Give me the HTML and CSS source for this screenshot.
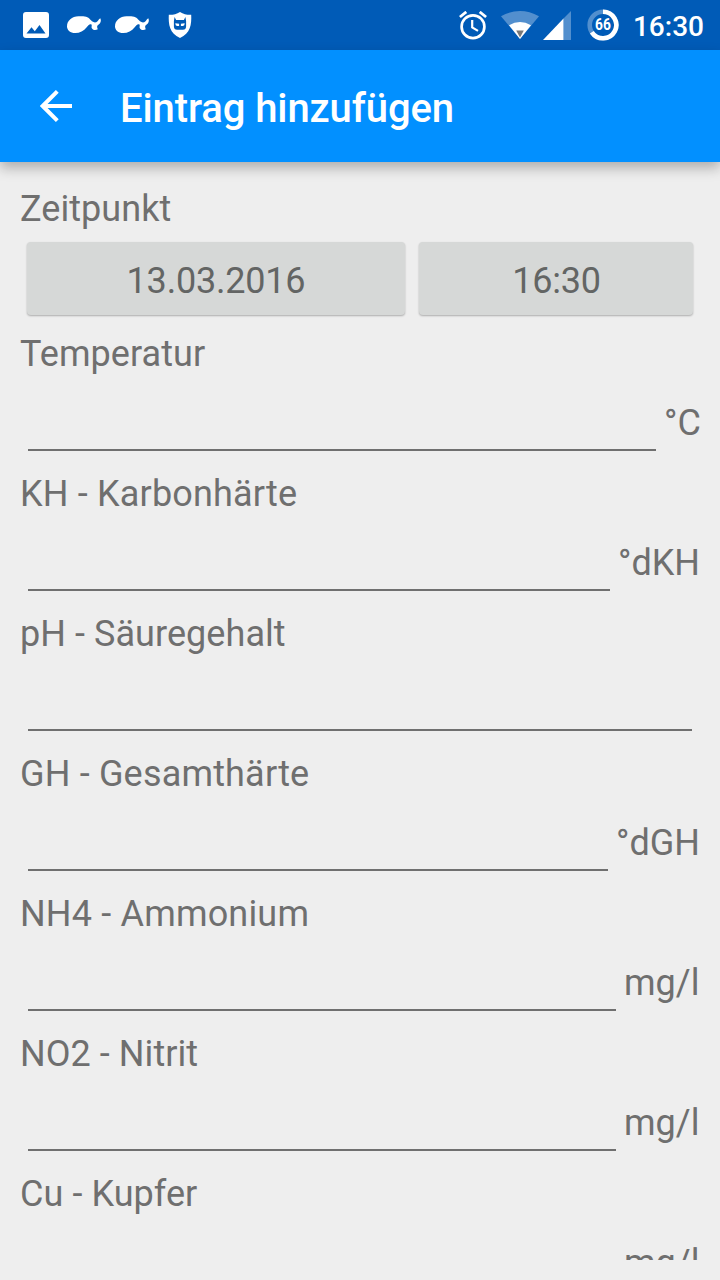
FILE: index.html
```html
<!DOCTYPE html>
<html lang="de">
<head>
    <meta charset="UTF-8">
    <meta name="viewport" content="width=device-width, initial-scale=1.0">
    <title>Eintrag hinzufügen</title>
    <link rel="stylesheet" href="styles.css">
</head>
<body>

    <!-- Statusleiste -->
    <div class="statusbar">
        <div class="notifications">
            <svg width="26" height="26" viewBox="0 0 26 26">
                <path fill="#fff" fill-rule="evenodd" d="M3 0h20a3 3 0 0 1 3 3v20a3 3 0 0 1-3 3H3a3 3 0 0 1-3-3V3a3 3 0 0 1 3-3zM3.500 21.500h19L16.500 13l-4.700 6.200L8.500 15.200z"/>
            </svg>
            <svg class="whale" width="34" height="18" viewBox="0 0 34 18">
                <path fill="#fff" d="M0 10.500C0 4.500 5 .5 11.500.3C19-.2 21.500 1.200 24 4.300c1.500 1.800 3.500 2.400 5.200 2C31 5.800 31.200 3 33.300 2.200c1.200 2.500.5 5.200-2.800 7.300c-.7 1.200-.3 2.300.3 3.800c-2.500 1.500-5.300.7-6.100-1.300c-.5-1.600.6-2.800-.5-3.700c-1.700-.6-3.200 1-4.500 3C16.800 15.300 12.500 17.200 8 17.100C3.500 17 0 14.300 0 10.500z"/>
            </svg>
            <svg class="whale" width="34" height="18" viewBox="0 0 34 18">
                <path fill="#fff" d="M0 10.500C0 4.500 5 .5 11.500.3C19-.2 21.500 1.200 24 4.300c1.500 1.800 3.500 2.400 5.200 2C31 5.800 31.200 3 33.300 2.200c1.200 2.500.5 5.200-2.800 7.300c-.7 1.200-.3 2.300.3 3.800c-2.500 1.500-5.300.7-6.100-1.300c-.5-1.600.6-2.800-.5-3.700c-1.700-.6-3.200 1-4.500 3C16.800 15.300 12.500 17.200 8 17.100C3.500 17 0 14.300 0 10.500z"/>
            </svg>
            <svg class="shield" width="24" height="26" viewBox="0 0 24 26">
                <path fill="#fff" d="M12 0C8.500 2.100 4.800 3 .8 2.800C.3 12.500 1.600 21.500 12 26C22.400 21.500 23.700 12.500 23.200 2.800C19.200 3 15.500 2.100 12 0z"/>
                <path fill="#005bb7" d="M6.600 5l1.500 3.100h7.800L17.400 5l.7 4v5.500c0 2-1.200 3.300-3.200 3.300H9.100c-2 0-3.200-1.300-3.200-3.300V9z"/>
                <path fill="#fff" d="M7.300 11.300l3.800.4v2.400H9Q7.300 13.800 7.300 11.300zM16.700 11.300l-3.800.4v2.400H15Q16.700 13.800 16.700 11.300z"/>
            </svg>
        </div>
        <div class="system">
            <svg class="alarm" width="28" height="29" viewBox="0 0 28 29">
                <g fill="none" stroke="#fff">
                    <circle cx="14" cy="15.700" r="11.400" stroke-width="2.700"/>
                    <path stroke-width="2.200" d="M13.200 9v7.400l5.800 3.500"/>
                    <path stroke-width="2.800" d="M.9 6L7.300.9M27.100 6L20.700.9"/>
                </g>
            </svg>
            <svg class="wifi" width="38" height="28" viewBox="0 0 38 28">
                <path fill="#fff" fill-opacity=".32" d="M0 5.200Q19-5.200 38 5.200L19 28z"/>
                <path fill="#fff" d="M8 14.300Q19 7.500 30 14.300L19 28z"/>
                <path fill="#777" d="M15.200 19.500h7.600L19 26.500z"/>
            </svg>
            <svg class="signal" width="28" height="29" viewBox="0 0 28 29">
                <path fill="#fff" fill-opacity=".32" d="M20.500 7.500L28 0v29h-7.500z"/>
                <path fill="#fff" d="M0 29L20.500 7.500V29z"/>
            </svg>
            <div class="battery">
                <svg width="32" height="32" viewBox="0 0 32 32">
                    <circle cx="16" cy="16" r="13.300" fill="none" stroke="#fff" stroke-opacity=".32" stroke-width="4.600"/>
                    <path fill="none" stroke="#fff" stroke-width="4.600" d="M16 2.700A13.300 13.300 0 1 1 4.800 23.200"/>
                </svg>
                <span class="battery-level">66</span>
            </div>
            <span class="clock">16:30</span>
        </div>
    </div>

    <!-- Toolbar -->
    <header class="toolbar">
        <svg class="back" width="32" height="32" viewBox="0 0 32 32">
            <path fill="none" stroke="#fff" stroke-width="4" d="M32 16H4M17.300 1.400L2.700 16L17.300 30.600"/>
        </svg>
        <h1>Eintrag hinzufügen</h1>
    </header>

    <!-- Formular -->
    <main class="formular">
        <div class="label">Zeitpunkt</div>
        <div class="zeitpunkt">
            <button class="boton datum">13.03.2016</button>
            <button class="boton uhrzeit">16:30</button>
        </div>

        <label class="label" for="temperatur">Temperatur</label>
        <div class="feld">
            <input type="text" id="temperatur">
            <span class="einheit grad">°C</span>
        </div>

        <label class="label weit" for="kh">KH - Karbonhärte</label>
        <div class="feld">
            <input type="text" id="kh">
            <span class="einheit">°dKH</span>
        </div>

        <label class="label" for="ph">pH - Säuregehalt</label>
        <div class="feld">
            <input type="text" id="ph">
        </div>

        <label class="label weit" for="gh">GH - Gesamthärte</label>
        <div class="feld">
            <input type="text" id="gh">
            <span class="einheit">°dGH</span>
        </div>

        <label class="label weit" for="nh4">NH4 - Ammonium</label>
        <div class="feld">
            <input type="text" id="nh4">
            <span class="einheit menge">mg/l</span>
        </div>

        <label class="label" for="no2">NO2 - Nitrit</label>
        <div class="feld">
            <input type="text" id="no2">
            <span class="einheit menge">mg/l</span>
        </div>

        <label class="label" for="cu">Cu - Kupfer</label>
        <div class="feld">
            <input type="text" id="cu">
            <span class="einheit menge">mg/l</span>
        </div>
    </main>

</body>
</html>
```

FILE: styles.css
```css
* {
    box-sizing: border-box;
}

body {
    margin: 0;
    height: 1280px;
    display: flex;
    flex-direction: column;
    overflow: hidden;
    background-color: #eeeeee;
    color: #6f6f6f;
    font-family: Roboto, sans-serif;
    font-size: 36px;
}

svg {
    display: block;
    flex: none;
}

/* Statusleiste */
.statusbar {
    flex: none;
    height: 50px;
    padding: 0 16px 0 23px;
    display: flex;
    justify-content: space-between;
    background-color: #005bb7;
    color: #fff;
}

.notifications,
.system {
    display: flex;
    align-items: center;
}

.whale {
    margin-left: 18px;
}

.whale + .whale {
    margin-left: 14px;
}

.shield {
    margin-left: 19px;
}

.wifi {
    margin-left: 14px;
}

.signal {
    margin-left: 4px;
}

.battery {
    position: relative;
    margin-left: 16px;
}

.battery-level {
    position: absolute;
    inset: 0;
    font-size: 16px;
    font-weight: 700;
    line-height: 32px;
    text-align: center;
    transform: scaleX(0.86);
}

.clock {
    margin-left: 14px;
    padding-top: 2px;
    font-size: 28px;
    font-weight: 500;
}

/* Toolbar */
.toolbar {
    flex: none;
    height: 112px;
    padding-left: 40px;
    display: flex;
    align-items: center;
    background-color: #0290ff;
    color: #fff;
    box-shadow: 0 6px 12px rgba(0, 0, 0, 0.27);
}

.toolbar h1 {
    margin: 4px 0 0 48px;
    font-size: 40px;
    font-weight: 500;
    letter-spacing: -0.1px;
}

/* Formular */
.formular {
    flex: none;
    height: 1078px;
    margin: 20px 20px 0;
    overflow: hidden;
}

.label {
    display: block;
    height: 48px;
    padding-top: 6px;
    line-height: 42px;
    letter-spacing: 0.06px;
}

.weit {
    letter-spacing: 0.18px;
}

.zeitpunkt {
    height: 97px;
    padding: 12px 7px;
    display: flex;
    gap: 14px;
}

.boton {
    padding: 4px 0 0;
    border: none;
    border-radius: 4px;
    background-color: #d6d8d7;
    color: #636564;
    font: inherit;
    letter-spacing: -0.2px;
    box-shadow: 0 1px 2px rgba(0, 0, 0, 0.28);
}

.datum {
    width: 378px;
}

.uhrzeit {
    flex: 1;
    padding-left: 1px;
}

.feld {
    height: 92px;
    display: flex;
    align-items: flex-start;
}

.feld input {
    flex: 1;
    min-width: 0;
    height: 76px;
    margin: 0 8px;
    padding: 0;
    border: none;
    border-bottom: 2px solid #6f6f6f;
    background: none;
    color: #212121;
    font: inherit;
    outline: none;
}

.einheit {
    padding-top: 27px;
    line-height: 42px;
}

.grad {
    width: 36px;
}

.menge {
    width: 76px;
}
```
